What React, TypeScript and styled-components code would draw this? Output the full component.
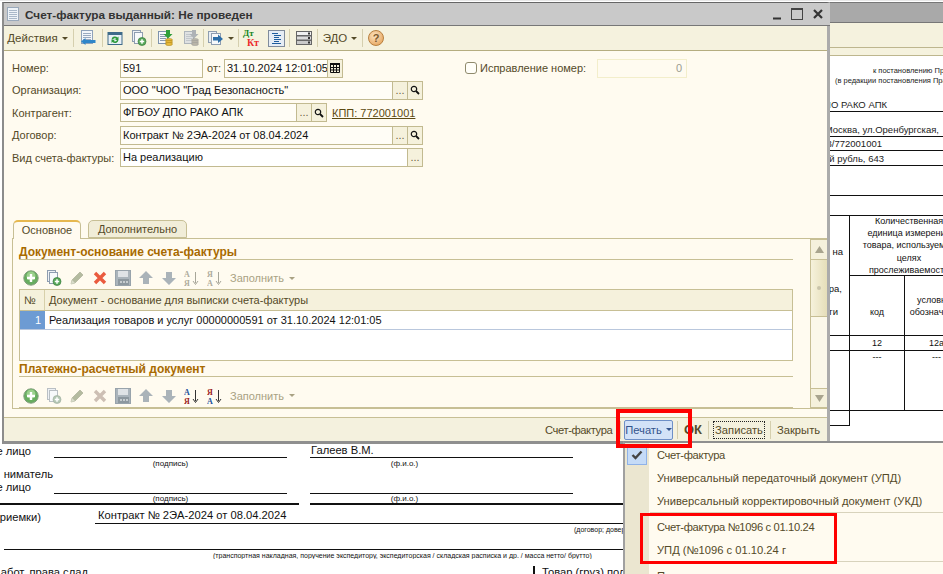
import React from 'react';
import styled, { createGlobalStyle } from 'styled-components';

const GlobalStyle = createGlobalStyle`
  html, body { margin: 0; padding: 0; background: #fff; }
  body { font-family: "Liberation Sans", Arial, sans-serif; font-size: 11px; color: #222; }
`;

const Stage = styled.div`
  position: relative;
  width: 943px;
  height: 574px;
  overflow: hidden;
  background: #fff;
  border-top: 1px solid #e8e8e8;
  box-sizing: border-box;
`;

/* ---------- printed form behind the dialog ---------- */

const RightWindow = styled.div`
  position: absolute;
  left: 830px;
  top: 1px;
  width: 113px;
  height: 573px;
  overflow: hidden;
  background: #fff;
  display: flex;
  flex-direction: column;
  border-top: 1px solid #777;
  box-sizing: border-box;
`;

const BackTitle = styled.div`
  height: 19px;
  flex: none;
  background: #a9a9a9;
  border-bottom: 1px solid #777;
`;

const BackBar = styled.div<{ $h: number }>`
  height: ${p => p.$h}px;
  flex: none;
  background: #f5f2de;
  border-bottom: 1px solid #bdb68e;
`;

const NoteGap = styled.div`
  height: 10px;
  flex: none;
`;

const Note = styled.div<{ $pl: number }>`
  font-size: 7.5px;
  line-height: 10px;
  height: 10px;
  padding-left: ${p => p.$pl}px;
  white-space: nowrap;
`;

const DocRow = styled.div<{ $h: number }>`
  height: ${p => p.$h}px;
  flex: none;
  box-sizing: border-box;
  border-bottom: 1px solid #111;
  display: flex;
  align-items: flex-end;
  font-size: 9.5px;
  line-height: 13px;
  white-space: nowrap;
`;

const Clipped = styled.div<{ $w: number }>`
  width: ${p => p.$w}px;
  display: flex;
  justify-content: flex-end;
  white-space: nowrap;
  flex: none;
`;

const FormTable = styled.div`
  display: grid;
  grid-template-columns: 19px 55px 64px;
  grid-template-rows: 60px 60px 15px 60px 15px;
  width: 138px;
  flex: none;
  font-size: 9px;
  line-height: 12.2px;
  text-align: center;
  color: #111;
`;

const FormCell = styled.div<{ $col: string; $row: string; $left?: boolean; $align?: string }>`
  grid-column: ${p => p.$col};
  grid-row: ${p => p.$row};
  border-left: ${p => (p.$left ? '1px solid #111' : 'none')};
  border-bottom: 1px solid #111;
  display: flex;
  flex-direction: column;
  justify-content: ${p => p.$align ?? 'center'};
  white-space: nowrap;
  overflow: hidden;
`;

const OpenCell = styled.div`
  grid-column: 2;
  grid-row: 5;
  border-left: 1px solid #111;
`;

const CellFoot = styled.div`
  padding-bottom: 17px;
`;

const SideBit = styled.div<{ $mt: number; $w: number }>`
  margin-top: ${p => p.$mt}px;
  width: ${p => p.$w}px;
  display: flex;
  justify-content: flex-end;
  line-height: 14px;
  font-size: 9.5px;
`;

const BottomDoc = styled.div`
  position: absolute;
  left: 0;
  top: 443px;
  width: 623px;
  height: 131px;
  overflow: hidden;
  background: #fff;
  font-size: 11.2px;
  color: #111;
`;

const SignRow = styled.div<{ $h: number }>`
  display: grid;
  grid-template-columns: 54px 233px 23px 263px;
  height: ${p => p.$h}px;
  align-items: end;
  line-height: 13px;
  white-space: nowrap;
`;

const SignLine = styled.div`
  height: 100%;
  box-sizing: border-box;
  border-bottom: 1px solid #111;
  display: flex;
  align-items: flex-end;
  padding-left: 1px;
`;

const Caption = styled.div<{ $col: number; $pr?: number }>`
  grid-column: ${p => p.$col};
  font-size: 8px;
  line-height: 9px;
  text-align: center;
  white-space: nowrap;
  padding-right: ${p => p.$pr ?? 0}px;
`;

const ThickRule = styled.div`
  display: grid;
  grid-template-columns: 299px 11px 313px;
  height: 2px;
  > span { background: #111; }
`;

const ContractRow = styled.div`
  display: flex;
  height: 19px;
  line-height: 14px;
  align-items: flex-end;
  white-space: nowrap;
`;

const ContractValue = styled.div`
  margin-left: 54px;
  flex: 1;
  padding-left: 3px;
  box-sizing: border-box;
  border-bottom: 1px solid #111;
  height: 100%;
  display: flex;
  align-items: flex-end;
  padding-bottom: 1px;
`;

const TinyRow = styled.div<{ $h: number; $pl: number }>`
  height: ${p => p.$h}px;
  font-size: 7px;
  line-height: 11px;
  white-space: nowrap;
  padding-left: ${p => p.$pl}px;
  overflow: hidden;
`;

const FullRule = styled.div`
  margin-left: 4px;
  height: 0;
  border-top: 1px solid #111;
`;

const LastRow = styled.div`
  display: flex;
  margin-top: 7px;
  justify-content: space-between;
  line-height: 12px;
  white-space: nowrap;
`;

const Receiver = styled.div`
  width: 90px;
  box-sizing: border-box;
  padding-left: 7px;
  border-left: 2px solid #111;
  overflow: hidden;
`;

/* ---------- dialog ---------- */

const Dialog = styled.div`
  position: absolute;
  left: 2px;
  top: 1px;
  width: 828px;
  height: 442px;
  box-sizing: border-box;
  display: flex;
  flex-direction: column;
  border-top: 1px solid #666;
  border-left: 2px solid #8c8c8c;
  border-right: 3px solid #ababab;
  border-bottom: 3px solid #8f8f8f;
  background: #fffbf0;
`;

const TitleBar = styled.div`
  height: 22px;
  flex: none;
  margin-right: -3px;
  background: #c9c9c9;
  border-bottom: 1px solid #777;
  display: flex;
  align-items: center;
  padding-left: 3px;
`;

const TitleText = styled.div`
  margin-left: 6px;
  font-size: 11.75px;
  font-weight: bold;
  color: #333;
  white-space: nowrap;
  flex: 1;
`;

const WindowButtons = styled.div`
  display: flex;
  align-items: center;
  gap: 10px;
  margin-right: 7px;
`;

const Toolbar = styled.div`
  height: 24px;
  flex: none;
  display: flex;
  align-items: center;
  background: #f5f2de;
  border-bottom: 1px solid #b5ad80;
  padding-left: 1px;
`;

const TbSep = styled.div`
  width: 1px;
  height: 18px;
  flex: none;
  background: #d5cfae;
`;

const TbCell = styled.div<{ $w: number; $pr?: number }>`
  width: ${p => p.$w}px;
  flex: none;
  box-sizing: border-box;
  padding-right: ${p => p.$pr ?? 0}px;
  display: flex;
  align-items: center;
  justify-content: center;
  color: #544a28;
  white-space: nowrap;
  gap: 4px;
  font-size: 11.5px;
`;

const Caret = styled.span<{ $c?: string }>`
  display: inline-block;
  width: 0;
  height: 0;
  border-left: 3px solid transparent;
  border-right: 3px solid transparent;
  border-top: 3px solid ${p => p.$c ?? '#544a28'};
`;

const DtKt = styled.div`
  display: flex;
  flex-direction: column;
  width: 16px;
  font-size: 9px;
  line-height: 9px;
  font-weight: bold;
  font-family: "Liberation Serif", serif;
  > span:first-child { color: #17851d; }
  > span:last-child { color: #ec2b2b; text-align: right; font-size: 10px; }
`;

const Pressed = styled.div`
  width: 17px;
  height: 17px;
  display: flex;
  align-items: center;
  justify-content: center;
  border: 1px solid #7f8b9c;
  background: #e6edf5;
  box-sizing: border-box;
`;

const HelpDot = styled.div`
  width: 16px;
  height: 16px;
  border-radius: 50%;
  background: radial-gradient(circle at 40% 35%, #fbe3c0, #e39a4d);
  border: 1px solid #b8803f;
  box-sizing: border-box;
  color: #7c5a2e;
  font-size: 11px;
  font-weight: bold;
  text-align: center;
  line-height: 14px;
`;

const Body = styled.div`
  flex: 1;
  min-height: 0;
  display: flex;
  flex-direction: column;
  padding: 8px 0 8px 8px;
`;

const Form = styled.div`
  display: flex;
  flex-direction: column;
  gap: 4.4px;
`;

const FormRow = styled.div`
  display: flex;
  align-items: center;
  height: 18px;
`;

const Label = styled.div`
  width: 108px;
  flex: none;
  color: #544a28;
  white-space: nowrap;
`;

const FieldBox = styled.div<{ $w: number; $plain?: boolean }>`
  width: ${p => p.$w}px;
  height: 19px;
  flex: none;
  box-sizing: border-box;
  display: flex;
  border: 1px solid #c2ba90;
  background: ${p => (p.$plain ? '#fffdf6' : '#fff')};
`;

const FieldValue = styled.div`
  flex: 1;
  min-width: 0;
  padding-left: 2px;
  line-height: 17px;
  color: #111;
  white-space: nowrap;
  overflow: hidden;
`;

const FieldBtn = styled.div`
  width: 15px;
  flex: none;
  box-sizing: border-box;
  border-left: 1px solid #c2ba90;
  background: #f5f1dc;
  display: flex;
  align-items: center;
  justify-content: center;
  color: #6d6442;
  font-size: 11px;
  line-height: 1;
`;

const FromLabel = styled.div`
  width: 21px;
  flex: none;
  padding-left: 4px;
  box-sizing: border-box;
  color: #544a28;
`;

const FixCheck = styled.div`
  width: 12px;
  height: 12px;
  flex: none;
  margin-left: 122px;
  box-sizing: border-box;
  border: 1px solid #8f8a6c;
  border-radius: 3px;
  background: #fffef8;
`;

const FixLabel = styled.div`
  margin-left: 3px;
  width: 117px;
  flex: none;
  color: #544a28;
  white-space: nowrap;
`;

const FixInput = styled.div`
  width: 90px;
  height: 19px;
  box-sizing: border-box;
  border: 1px solid #f3eecb;
  color: #9c9c90;
  text-align: right;
  padding-right: 4px;
  line-height: 17px;
`;

const KppLink = styled.div`
  margin-left: 5px;
  color: #5c4a12;
  text-decoration: underline;
  white-space: nowrap;
`;

const Tabs = styled.div`
  margin-top: auto;
  display: flex;
  flex-direction: column;
`;

const TabStrip = styled.div`
  display: flex;
  gap: 7px;
  height: 18px;
  padding-left: 1px;
  position: relative;
  z-index: 1;
`;

const Tab = styled.div<{ $active?: boolean; $w: number }>`
  width: ${p => p.$w}px;
  height: ${p => (p.$active ? 19 : 18)}px;
  box-sizing: border-box;
  border: 1px solid #c7bf95;
  border-bottom: ${p => (p.$active ? 'none' : '1px solid #c7bf95')};
  border-top: ${p => (p.$active ? '2px solid #e6b84f' : '1px solid #c7bf95')};
  border-radius: 5px 5px 0 0;
  background: ${p => (p.$active ? '#fffbf0' : '#f1edd8')};
  color: #544a28;
  text-align: center;
  line-height: 16px;
  white-space: nowrap;
`;

const TabPanel = styled.div`
  height: 171px;
  box-sizing: border-box;
  display: flex;
  border-left: 1px solid #c7bf95;
  border-top: 1px solid #c7bf95;
  border-bottom: 1px solid #c7bf95;
`;

const TabContent = styled.div`
  flex: 1;
  min-width: 0;
  padding-left: 6px;
  overflow: hidden;
`;

const SectionTitle = styled.div<{ $h: number }>`
  width: 774px;
  height: ${p => p.$h}px;
  box-sizing: border-box;
  border-bottom: 1px solid #c7bf95;
  color: #a86a00;
  font-weight: bold;
  font-size: 12px;
  line-height: 13px;
  display: flex;
  align-items: flex-end;
  white-space: nowrap;
`;

const SubToolbar = styled.div<{ $h: number }>`
  height: ${p => p.$h}px;
  box-sizing: border-box;
  padding-top: 7px;
  display: flex;
  align-items: center;
`;

const SubCell = styled.div`
  width: 23px;
  flex: none;
  display: flex;
  align-items: center;
  justify-content: center;
`;

const FillBtn = styled.div`
  margin-left: 4px;
  display: flex;
  align-items: center;
  gap: 5px;
  color: #a9a283;
  white-space: nowrap;
`;

const Grid = styled.div`
  width: 774px;
  height: 72px;
  box-sizing: border-box;
  border: 1px solid #c7bf95;
  background: #fff;
`;

const GridHead = styled.div`
  height: 21px;
  display: grid;
  grid-template-columns: 25px 1fr;
  background: #f5f1dc;
  border-bottom: 1px solid #c7bf95;
  box-sizing: border-box;
  line-height: 20px;
  color: #544a28;
  > div { padding-left: 4px; }
  > div:first-child { border-right: 1px solid #d7d0aa; padding-left: 4px; }
`;

const GridRow = styled.div`
  height: 19px;
  display: grid;
  grid-template-columns: 25px 1fr;
  box-sizing: border-box;
  border-bottom: 1px solid #b9c7dd;
  line-height: 18px;
  color: #111;
  white-space: nowrap;
`;

const RowNumber = styled.div`
  background: #6d9bd3;
  color: #fff;
  text-align: right;
  padding-right: 4px;
`;

const RowText = styled.div`
  padding-left: 4px;
`;

const GridStub = styled.div`
  width: 774px;
  height: 1px;
  background: #c7bf95;
`;

const Scrollbar = styled.div`
  width: 17px;
  flex: none;
  display: flex;
  flex-direction: column;
  border-left: 1px solid #c7bf95;
  box-sizing: border-box;
  background: #fbf8ea;
`;

const ScrollBtn = styled.div<{ $h: number }>`
  height: ${p => p.$h}px;
  flex: none;
  box-sizing: border-box;
  display: flex;
  align-items: center;
  justify-content: center;
  background: #f5f1dc;
  border-top: 1px solid #c7bf95;
  border-bottom: 1px solid #c7bf95;
`;

const ScrollThumb = styled.div`
  height: 57px;
  flex: none;
  background: linear-gradient(to right, #f6f2dc, #e5deb9);
  border-bottom: 1px solid #c7bf95;
  box-sizing: border-box;
  display: flex;
  align-items: center;
  justify-content: center;
  &::after {
    content: '';
    width: 4px;
    height: 4px;
    border-radius: 50%;
    background: #c9c4aa;
  }
`;

const ScrollTrack = styled.div`
  flex: 1;
`;

const Footer = styled.div`
  height: 24px;
  flex: none;
  box-sizing: border-box;
  border-top: 1px solid #c7bf95;
  background: #f4f1de;
  display: flex;
  align-items: center;
  justify-content: flex-end;
  color: #544a28;
  font-size: 11.2px;
`;

const FootCell = styled.div<{ $w: number; $pl?: number; $bold?: boolean; $tight?: boolean }>`
  width: ${p => p.$w}px;
  flex: none;
  box-sizing: border-box;
  padding-left: ${p => p.$pl ?? 0}px;
  font-weight: ${p => (p.$bold ? 'bold' : 'normal')};
  font-size: ${p => (p.$bold ? 13 : 11.2)}px;
  letter-spacing: ${p => (p.$tight ? '-0.4px' : 'normal')};
  white-space: nowrap;
`;

const PrintBtn = styled.div`
  width: 49px;
  height: 20px;
  box-sizing: border-box;
  margin: 0 4px 0 3px;
  flex: none;
  border: 1px solid #6d8fc7;
  border-radius: 2px;
  background: #d3e2f7;
  color: #34548c;
  display: flex;
  align-items: center;
  justify-content: center;
  gap: 4px;
  white-space: nowrap;
`;

const SaveBtn = styled.div`
  width: 52px;
  height: 18px;
  margin: 0 5px 0 4px;
  flex: none;
  box-sizing: border-box;
  border: 1px dotted #222;
  text-align: center;
  line-height: 16px;
  white-space: nowrap;
`;

/* ---------- popup menu ---------- */

const Menu = styled.div`
  position: absolute;
  left: 623px;
  top: 440px;
  width: 320px;
  height: 134px;
  box-sizing: border-box;
  overflow: hidden;
  border-left: 2px solid #a0a0a0;
  border-top: 2px solid #8f8f8f;
  background: linear-gradient(to right, #ebe6d0 24px, #fffbf0 24px);
`;

const MenuItem = styled.div<{ $tight?: boolean }>`
  height: 23px;
  display: flex;
  align-items: center;
  color: #544a28;
  white-space: nowrap;
  font-size: 11.2px;
  letter-spacing: ${p => (p.$tight ? '-0.35px' : 'normal')};
`;

const CheckSlot = styled.div<{ $on?: boolean }>`
  width: 20px;
  height: 20px;
  flex: none;
  margin: 0 10px 0 2px;
  box-sizing: border-box;
  display: flex;
  align-items: center;
  justify-content: center;
  background: ${p => (p.$on ? '#c5dbf7' : 'transparent')};
  border: 1px solid ${p => (p.$on ? '#8fb2e8' : 'transparent')};
`;

const MenuSep = styled.div`
  height: 3px;
  margin-left: 25px;
  box-sizing: border-box;
  border-top: 1px solid #d8d3bc;
`;

/* ---------- red marks drawn over the screenshot ---------- */

const Highlight = styled.div<{ $l: number; $t: number; $w: number; $h: number; $b: number }>`
  position: absolute;
  left: ${p => p.$l}px;
  top: ${p => p.$t}px;
  width: ${p => p.$w}px;
  height: ${p => p.$h}px;
  box-sizing: border-box;
  border: ${p => p.$b}px solid #f00;
`;

/* ---------- icons ---------- */

const Svg = ({ children, size = 16 }: { children: React.ReactNode; size?: number }) => (
  <svg width={size} height={size} viewBox="0 0 16 16" style={{ display: 'block', flex: 'none' }}>
    {children}
  </svg>
);

const Lines = ({ x, y, w, n, c = '#7d8fa8' }: { x: number; y: number; w: number; n: number; c?: string }) => (
  <>
    {Array.from({ length: n }).map((_, i) => (
      <line key={i} x1={x} x2={x + w} y1={y + i * 2 + 0.5} y2={y + i * 2 + 0.5} stroke={c} strokeWidth="1" />
    ))}
  </>
);

const TitleDocIcon = () => (
  <svg width="12" height="14" viewBox="0 0 12 14" style={{ display: 'block', flex: 'none' }}>
    <rect x="0.5" y="0.5" width="11" height="13" fill="#eef3f8" stroke="#9aa9bb" />
    <Lines x={2} y={3} w={8} n={5} c="#a9b8c9" />
  </svg>
);

const DocBackIcon = () => (
  <Svg>
    <rect x="1.5" y="0.5" width="11" height="13" fill="#f3f6fa" stroke="#8fa2ba" />
    <Lines x={3} y={3} w={8} n={4} c="#9aaac0" />
    <path d="M1 11.5 L5.5 8 V10 H15.5 V13 H5.5 V15 Z" fill="#2f86c9" />
  </Svg>
);

const WindowRefreshIcon = () => (
  <Svg>
    <rect x="1" y="2.5" width="14" height="12" fill="#e8f0f6" stroke="#3e6b8a" />
    <rect x="1" y="2.5" width="14" height="2.5" fill="#3e6b8a" />
    <path d="M4.5 9.5 A3.5 3.5 0 0 1 10.5 7.5 L11.5 6.5 V10 H8 L9.3 8.8 A2 2 0 0 0 6 9.5 Z" fill="#2e9a3c" />
    <path d="M11.5 10 A3.5 3.5 0 0 1 5.5 12 L4.5 13 V9.8 H8 L6.8 11 A2 2 0 0 0 10 10 Z" fill="#2e9a3c" />
  </Svg>
);

const CopyPlusIcon = ({ muted }: { muted?: boolean }) => (
  <Svg>
    <rect x="1.5" y="0.5" width="8" height="11" fill="#eef1f5" stroke={muted ? '#b9bfc4' : '#8e9db0'} />
    <rect x="3.5" y="2.5" width="8" height="11" fill="#f7f9fb" stroke={muted ? '#b9bfc4' : '#8e9db0'} />
    <circle cx="11" cy="11.5" r="4" fill={muted ? '#b4c7b4' : '#58a85a'} stroke={muted ? '#a3b2a3' : '#3b7d3e'} strokeWidth="0.7" />
    <path d="M11 9.3 V13.7 M8.8 11.5 H13.2" stroke="#fff" strokeWidth="1.5" />
  </Svg>
);

const PostIcon = ({ muted }: { muted?: boolean }) => {
  const coin = muted ? '#b9b5a8' : '#e7b93c';
  const arrow = muted ? '#aeb2b6' : '#2f9e3a';
  return (
    <Svg>
      <rect x="1.5" y="1.5" width="9" height="12" fill={muted ? '#dfe1e2' : '#f6f8fb'} stroke={muted ? '#aeb5bb' : '#7e93ad'} />
      <Lines x={3} y={4} w={6} n={4} c={muted ? '#c2c7cb' : '#8a9ab0'} />
      <path d="M9 0 H13 V4 H15.5 L11 8.5 L6.5 4 H9 Z" fill={arrow} />
      <ellipse cx="12" cy="10" rx="3.5" ry="1.6" fill={coin} stroke={muted ? '#999' : '#a37c12'} strokeWidth="0.5" />
      <ellipse cx="12" cy="12" rx="3.5" ry="1.6" fill={coin} stroke={muted ? '#999' : '#a37c12'} strokeWidth="0.5" />
      <ellipse cx="12" cy="14" rx="3.5" ry="1.6" fill={coin} stroke={muted ? '#999' : '#a37c12'} strokeWidth="0.5" />
    </Svg>
  );
};

const ForwardDocIcon = () => (
  <Svg>
    <rect x="0.5" y="1.5" width="8" height="11" fill="#e9eef4" stroke="#8e9db0" />
    <rect x="3.5" y="3.5" width="9" height="11" fill="#f7f9fb" stroke="#8e9db0" />
    <path d="M5 7 H10 V4.5 L15 9 L10 13 V10.5 H5 Z" fill="#2c6ea8" />
  </Svg>
);

const ListIcon = () => (
  <svg width="13" height="13" viewBox="0 0 13 13" style={{ display: 'block' }}>
    <path d="M2 1.5 H8 M4 3.5 H11 M4 5.5 H9 M4 7.5 H11 M4 9.5 H9 M2 11.5 H11" stroke="#1f5d9e" strokeWidth="1" />
  </svg>
);

const StackIcon = () => (
  <Svg>
    <rect x="0.5" y="1.5" width="15" height="4" fill="#f0f0f0" stroke="#666" />
    <rect x="0.5" y="6" width="15" height="4" fill="#dcdcdc" stroke="#666" />
    <rect x="0.5" y="10.5" width="15" height="4" fill="#c9c9c9" stroke="#666" />
    <rect x="12" y="2.5" width="2" height="2" fill="#333" />
    <rect x="12" y="7" width="2" height="2" fill="#333" />
    <rect x="12" y="11.5" width="2" height="2" fill="#333" />
  </Svg>
);

const PlusCircleIcon = () => (
  <Svg>
    <circle cx="8" cy="8" r="7.2" fill="#67ad5f" stroke="#7f9d7b" />
    <circle cx="8" cy="6" r="4.5" fill="#9ad08c" />
    <path d="M8 4 V12 M4 8 H12" stroke="#fff" strokeWidth="2.4" />
  </Svg>
);

const PencilIcon = () => (
  <Svg>
    <path d="M2 14 L3 10 L11 2 L14 5 L6 13 Z" fill="#b4bba0" stroke="#a2a88f" strokeWidth="0.6" />
    <path d="M2 14 L3 10 L6 13 Z" fill="#d9dccb" />
  </Svg>
);

const CrossIcon = ({ muted }: { muted?: boolean }) => (
  <Svg>
    <path d="M3 3 L13 13 M13 3 L3 13" stroke={muted ? '#cdbfb4' : '#ea5b3f'} strokeWidth="3.4" />
  </Svg>
);

const SaveIcon = () => (
  <Svg>
    <rect x="0.5" y="0.5" width="15" height="15" fill="#aab4bb" stroke="#98a3ab" />
    <rect x="3" y="1" width="10" height="6" fill="#dfe3e6" />
    <rect x="3" y="9" width="11" height="6" fill="#8d989f" />
    <path d="M5 12 H13" stroke="#d9dde0" strokeWidth="1.5" strokeDasharray="2 1" />
  </Svg>
);

const MoveIcon = ({ down }: { down?: boolean }) => (
  <Svg>
    <path d={down ? 'M5 2 H11 V8 H15 L8 15 L1 8 H5 Z' : 'M8 1 L15 8 H11 V14 H5 V8 H1 Z'} fill="#aab3b9" />
  </Svg>
);

const SortIcon = ({ reverse, muted }: { reverse?: boolean; muted?: boolean }) => {
  const a = muted ? '#aeab9c' : '#1b4f9c';
  const b = muted ? '#aeab9c' : '#9b1c1c';
  const top = reverse ? b : a;
  const low = reverse ? a : b;
  return (
    <svg width="15" height="16" viewBox="0 0 15 16" style={{ display: 'block' }}>
      <text x="0" y="7" fontSize="8" fontWeight="bold" fontFamily="Liberation Serif, serif" fill={top}>{reverse ? 'Я' : 'А'}</text>
      <text x="0" y="15.5" fontSize="8" fontWeight="bold" fontFamily="Liberation Serif, serif" fill={low}>{reverse ? 'А' : 'Я'}</text>
      <path d="M11.5 2 V13 M9 11 L11.5 14.5 L14 11" fill="none" stroke={muted ? '#a7a699' : '#333'} strokeWidth="1" />
    </svg>
  );
};

const LensIcon = () => (
  <svg width="10" height="10" viewBox="0 0 10 10" style={{ display: 'block' }}>
    <circle cx="4" cy="4" r="2.7" fill="none" stroke="#111" strokeWidth="1.2" />
    <path d="M6 6 L9 9" stroke="#111" strokeWidth="1.8" />
  </svg>
);

const CalendarIcon = () => (
  <svg width="10" height="10" viewBox="0 0 10 10" style={{ display: 'block' }}>
    <rect x="0" y="0" width="10" height="2" fill="#111" />
    <path d="M0.5 2 V9.5 H9.5 V2 M0 4.5 H10 M0 7 H10 M3.5 2 V9.5 M6.5 2 V9.5" fill="none" stroke="#111" strokeWidth="1" />
  </svg>
);

const CheckMark = () => (
  <svg width="12" height="10" viewBox="0 0 12 10" style={{ display: 'block' }}>
    <path d="M1.5 5 L4.5 8 L10.5 1.5" fill="none" stroke="#444" strokeWidth="2.4" />
  </svg>
);

const ScrollArrow = ({ down }: { down?: boolean }) => (
  <svg width="9" height="7" viewBox="0 0 9 7" style={{ display: 'block' }}>
    <path d={down ? 'M0 0 H9 L4.5 7 Z' : 'M4.5 0 L9 7 H0 Z'} fill="#a8a48e" />
  </svg>
);

const MinimizeGlyph = () => (
  <svg width="8" height="12" viewBox="0 0 8 12" style={{ display: 'block' }}>
    <rect x="0" y="9.5" width="8" height="2" fill="#333" />
  </svg>
);

const MaximizeGlyph = () => (
  <svg width="12" height="12" viewBox="0 0 12 12" style={{ display: 'block' }}>
    <rect x="0.5" y="0.5" width="11" height="11" fill="none" stroke="#444" />
    <rect x="0" y="0" width="12" height="2" fill="#444" />
  </svg>
);

const CloseGlyph = () => (
  <svg width="10" height="10" viewBox="0 0 10 10" style={{ display: 'block' }}>
    <path d="M1 1 L9 9 M9 1 L1 9" stroke="#333" strokeWidth="2.2" />
  </svg>
);

/* ---------- parts ---------- */

const RowTools = ({ active }: { active?: boolean }) => (
  <SubToolbar $h={active ? 29 : 30}>
    <SubCell><PlusCircleIcon /></SubCell>
    <SubCell><CopyPlusIcon muted={!active} /></SubCell>
    <SubCell><PencilIcon /></SubCell>
    <SubCell><CrossIcon muted={!active} /></SubCell>
    <SubCell><SaveIcon /></SubCell>
    <SubCell><MoveIcon /></SubCell>
    <SubCell><MoveIcon down /></SubCell>
    <SubCell><SortIcon muted={active} /></SubCell>
    <SubCell><SortIcon reverse muted={active} /></SubCell>
    <FillBtn>Заполнить <Caret $c="#a9a283" /></FillBtn>
  </SubToolbar>
);

const Lookup = () => (
  <>
    <FieldBtn>...</FieldBtn>
    <FieldBtn><LensIcon /></FieldBtn>
  </>
);

const App = () => (
  <Stage>
    <GlobalStyle />

    <RightWindow>
      <BackTitle />
      <BackBar $h={24} />
      <BackBar $h={7} />
      <NoteGap />
      <Note $pl={43}>к постановлению Правительства</Note>
      <Note $pl={5}>(в редакции постановления Правительства</Note>
      <DocRow $h={26}><Clipped $w={57}>ФГБОУ ДПО РАКО АПК</Clipped></DocRow>
      <DocRow $h={25}><Clipped $w={109}>г.Москва, ул.Оренбургская,</Clipped></DocRow>
      <DocRow $h={14}><Clipped $w={52}>7708/772001001</Clipped></DocRow>
      <DocRow $h={15}><Clipped $w={54}>Российский рубль, 643</Clipped></DocRow>
      <DocRow $h={30} />
      <DocRow $h={20} />
      <FormTable>
        <FormCell $col="1" $row="1 / 3" $align="flex-start">
          <SideBit $mt={29} $w={13}>на</SideBit>
          <SideBit $mt={23} $w={12}>ра,</SideBit>
          <SideBit $mt={9} $w={8}>ги</SideBit>
        </FormCell>
        <FormCell $col="2 / 4" $row="1" $left>
          <div>Количественная</div>
          <div>единица измерения</div>
          <div>товара, используемая</div>
          <div>целях</div>
          <div>прослеживаемости</div>
        </FormCell>
        <FormCell $col="2" $row="2" $left $align="flex-end"><CellFoot>код</CellFoot></FormCell>
        <FormCell $col="3" $row="2" $left $align="flex-end">
          <div>условное</div>
          <CellFoot>обозначение</CellFoot>
        </FormCell>
        <FormCell $col="1" $row="3" />
        <FormCell $col="2" $row="3" $left>12</FormCell>
        <FormCell $col="3" $row="3" $left>12а</FormCell>
        <FormCell $col="1" $row="4" />
        <FormCell $col="2" $row="4" $left $align="flex-start">---</FormCell>
        <FormCell $col="3" $row="4" $left $align="flex-start">---</FormCell>
        <FormCell $col="1" $row="5" />
        <OpenCell />
      </FormTable>
    </RightWindow>

    <BottomDoc>
      <SignRow $h={14}>
        <Clipped $w={31}>е лицо</Clipped>
        <SignLine />
        <div />
        <SignLine>Галеев В.М.</SignLine>
      </SignRow>
      <SignRow $h={10}>
        <div />
        <Caption $col={2}>(подпись)</Caption>
        <div />
        <Caption $col={4} $pr={74}>(ф.и.о.)</Caption>
      </SignRow>
      <SignRow $h={10}>
        <Clipped $w={53}>ниматель</Clipped>
      </SignRow>
      <SignRow $h={16}>
        <Clipped $w={31}>е лицо</Clipped>
        <SignLine />
        <div />
        <SignLine />
      </SignRow>
      <SignRow $h={9}>
        <div />
        <Caption $col={2}>(подпись)</Caption>
        <div />
        <Caption $col={4} $pr={74}>(ф.и.о.)</Caption>
      </SignRow>
      <ThickRule><span /><i /><span /></ThickRule>
      <ContractRow>
        <Clipped $w={41}>риемки)</Clipped>
        <ContractValue>Контракт № 2ЭА-2024 от 08.04.2024</ContractValue>
      </ContractRow>
      <TinyRow $h={25} $pl={574}>(договор; доверенность и др.)</TinyRow>
      <FullRule />
      <TinyRow $h={9} $pl={213}>(транспортная накладная, поручение экспедитору, экспедиторская / складская расписка и др. / масса нетто/ брутто)</TinyRow>
      <LastRow>
        <Clipped $w={88}>абот, права слад</Clipped>
        <Receiver>Товар (груз) получил</Receiver>
      </LastRow>
    </BottomDoc>

    <Dialog>
      <TitleBar>
        <TitleDocIcon />
        <TitleText>Счет-фактура выданный: Не проведен</TitleText>
        <WindowButtons>
          <MinimizeGlyph />
          <MaximizeGlyph />
          <CloseGlyph />
        </WindowButtons>
      </TitleBar>

      <Toolbar>
        <TbCell $w={68} $pr={3}>Действия <Caret /></TbCell>
        <TbSep />
        <TbCell $w={28}><DocBackIcon /></TbCell>
        <TbSep />
        <TbCell $w={24}><WindowRefreshIcon /></TbCell>
        <TbCell $w={24}><CopyPlusIcon /></TbCell>
        <TbSep />
        <TbCell $w={26}><PostIcon /></TbCell>
        <TbCell $w={25}><PostIcon muted /></TbCell>
        <TbSep />
        <TbCell $w={34}><ForwardDocIcon /><Caret /></TbCell>
        <TbSep />
        <TbCell $w={24}><DtKt><span>Дт</span><span>Кт</span></DtKt></TbCell>
        <TbCell $w={26}><Pressed><ListIcon /></Pressed></TbCell>
        <TbSep />
        <TbCell $w={27}><StackIcon /></TbCell>
        <TbSep />
        <TbCell $w={44}>ЭДО <Caret /></TbCell>
        <TbSep />
        <TbCell $w={26}><HelpDot>?</HelpDot></TbCell>
      </Toolbar>

      <Body>
        <Form>
          <FormRow>
            <Label>Номер:</Label>
            <FieldBox $w={83} $plain><FieldValue>591</FieldValue></FieldBox>
            <FromLabel>от:</FromLabel>
            <FieldBox $w={119} $plain>
              <FieldValue>31.10.2024 12:01:05</FieldValue>
              <FieldBtn><CalendarIcon /></FieldBtn>
            </FieldBox>
            <FixCheck />
            <FixLabel>Исправление номер:</FixLabel>
            <FixInput>0</FixInput>
          </FormRow>
          <FormRow>
            <Label>Организация:</Label>
            <FieldBox $w={303} $plain>
              <FieldValue>ООО "ЧОО "Град Безопасность"</FieldValue>
              <Lookup />
            </FieldBox>
          </FormRow>
          <FormRow>
            <Label>Контрагент:</Label>
            <FieldBox $w={207} $plain>
              <FieldValue>ФГБОУ ДПО РАКО АПК</FieldValue>
              <Lookup />
            </FieldBox>
            <KppLink>КПП: 772001001</KppLink>
          </FormRow>
          <FormRow>
            <Label>Договор:</Label>
            <FieldBox $w={303} $plain>
              <FieldValue>Контракт № 2ЭА-2024 от 08.04.2024</FieldValue>
              <Lookup />
            </FieldBox>
          </FormRow>
          <FormRow>
            <Label>Вид счета-фактуры:</Label>
            <FieldBox $w={303}>
              <FieldValue>На реализацию</FieldValue>
              <FieldBtn>...</FieldBtn>
            </FieldBox>
          </FormRow>
        </Form>

        <Tabs>
          <TabStrip>
            <Tab $active $w={68}>Основное</Tab>
            <Tab $w={99}>Дополнительно</Tab>
          </TabStrip>
          <TabPanel>
            <TabContent>
              <SectionTitle $h={21}>Документ-основание счета-фактуры</SectionTitle>
              <RowTools active />
              <Grid>
                <GridHead>
                  <div>№</div>
                  <div>Документ - основание для выписки счета-фактуры</div>
                </GridHead>
                <GridRow>
                  <RowNumber>1</RowNumber>
                  <RowText>Реализация товаров и услуг 00000000591 от 31.10.2024 12:01:05</RowText>
                </GridRow>
              </Grid>
              <SectionTitle $h={16}>Платежно-расчетный документ</SectionTitle>
              <RowTools />
              <GridStub />
            </TabContent>
            <Scrollbar>
              <ScrollBtn $h={21}><ScrollArrow /></ScrollBtn>
              <ScrollThumb />
              <ScrollTrack />
              <ScrollBtn $h={20}><ScrollArrow down /></ScrollBtn>
            </Scrollbar>
          </TabPanel>
        </Tabs>
      </Body>

      <Footer>
        <FootCell $w={80} $pl={5} $tight>Счет-фактура</FootCell>
        <TbSep />
        <PrintBtn>Печать <Caret $c="#34548c" /></PrintBtn>
        <TbSep />
        <FootCell $w={30} $pl={6} $bold>ОК</FootCell>
        <TbSep />
        <SaveBtn>Записать</SaveBtn>
        <TbSep />
        <FootCell $w={56} $pl={6}>Закрыть</FootCell>
      </Footer>
    </Dialog>

    <Menu>
      <MenuItem $tight><CheckSlot $on><CheckMark /></CheckSlot>Счет-фактура</MenuItem>
      <MenuItem><CheckSlot />Универсальный передаточный документ (УПД)</MenuItem>
      <MenuItem><CheckSlot />Универсальный корректировочный документ (УКД)</MenuItem>
      <MenuSep />
      <MenuItem $tight><CheckSlot />Счет-фактура №1096 с 01.10.24</MenuItem>
      <MenuItem><CheckSlot />УПД (№1096 с 01.10.24 г</MenuItem>
      <MenuSep />
      <MenuItem><CheckSlot />П</MenuItem>
    </Menu>

    <Highlight $l={616} $t={408} $w={76} $h={39} $b={4} />
    <Highlight $l={640} $t={512} $w={197} $h={51} $b={3} />
  </Stage>
);

export default App;
